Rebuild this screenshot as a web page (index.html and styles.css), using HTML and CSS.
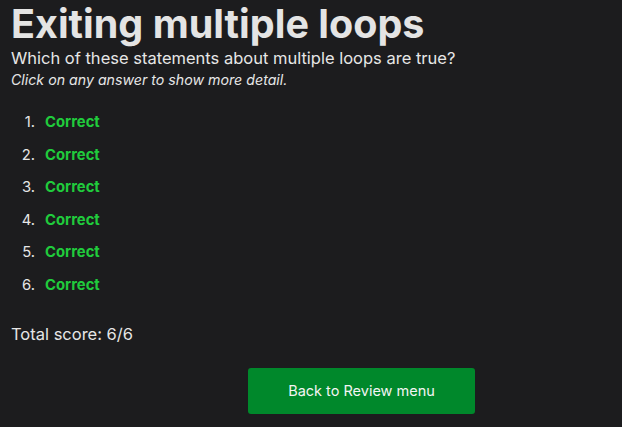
FILE: index.html
```html
<!DOCTYPE html>
<html>
<head>
<meta charset="utf-8">
<link rel="stylesheet" href="styles.css">
</head>
<body>
<main class="page">
  <h1 class="title">Exiting multiple loops</h1>
  <p class="question">Which of these statements about multiple loops are true?</p>
  <p class="hint">Click on any answer to show more detail.</p>
  <ol class="answers">
    <li><span class="ok">Correct</span></li>
    <li><span class="ok">Correct</span></li>
    <li><span class="ok">Correct</span></li>
    <li><span class="ok">Correct</span></li>
    <li><span class="ok">Correct</span></li>
    <li><span class="ok">Correct</span></li>
  </ol>
  <p class="score">Total score: 6/6</p>
  <div class="actions">
    <button class="back">Back to Review menu</button>
  </div>
</main>
</body>
</html>
```
FILE: styles.css
```css
html, body {
  margin: 0;
  padding: 0;
  background: #1c1c1e;
}
body {
  font-family: Inter, "Noto Sans", sans-serif;
  color: #e6e6e6;
}
.page {
  padding: 0 11px;
}
.title {
  margin: 0;
  padding-top: 2px;
  font-size: 39.5px;
  line-height: 44px;
  font-weight: 700;
  color: #e4e4e4;
}
.question {
  margin: 0;
  font-size: 16.5px;
  line-height: 24px;
}
.hint {
  margin: 0;
  font-size: 14.2px;
  line-height: 20px;
  font-style: italic;
}
.answers {
  margin: 22px 0 0 0;
  padding: 0;
  list-style: none;
  counter-reset: item;
  font-size: 14.8px;
}
.answers li {
  display: flex;
  height: 32.6px;
  line-height: 20px;
  counter-increment: item;
}
.answers li::before {
  content: counter(item) ".";
  width: 24px;
  margin-right: 10px;
  text-align: right;
  color: #e6e6e6;
}
.ok {
  color: #20cb3c;
  font-weight: 700;
}
.score {
  margin: 14px 0 0 0;
  font-size: 16.5px;
  line-height: 24px;
}
.actions {
  display: flex;
  padding-left: 237px;
  margin-top: 22px;
}
.back {
  width: 227px;
  height: 46px;
  border: none;
  border-radius: 3px;
  background: #00882b;
  color: #f4f4f4;
  font-family: Inter, "Noto Sans", sans-serif;
  font-size: 14.5px;
}
```
